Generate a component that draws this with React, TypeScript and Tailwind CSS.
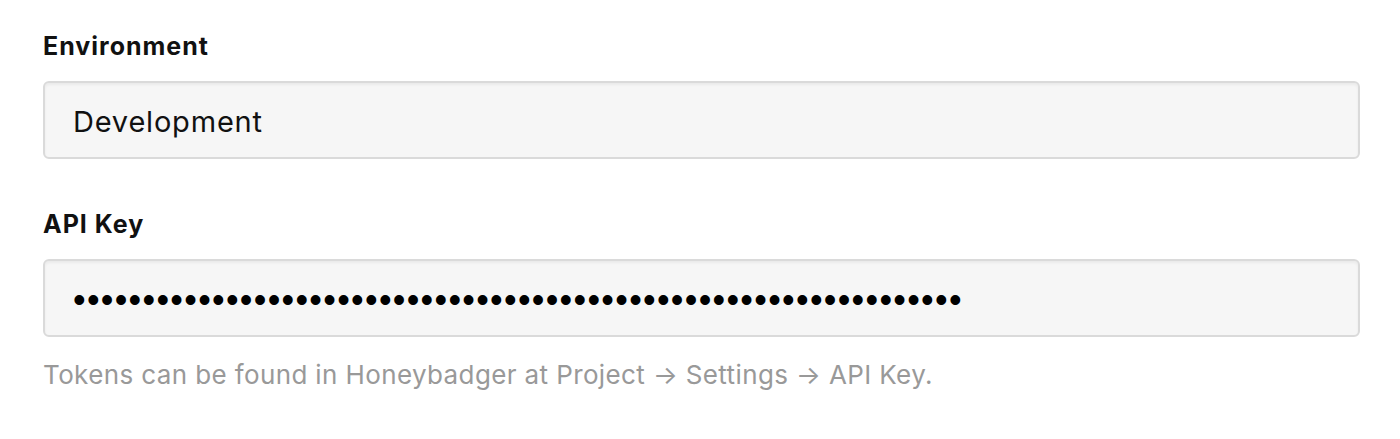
export default function App() {
  const dots = "•".repeat(64);
  return (
    <div className="w-[1400px] h-[439px] bg-white pl-[43px] pr-[40px] pt-[30px]" style={{ fontFamily: "Inter, 'Liberation Sans', sans-serif" }}>
      <div className="text-[25px] font-bold leading-[32px] tracking-[1px] text-[#111]">Environment</div>
      <div className="mt-[19px] h-[78px] rounded-[6px] border-2 border-[#dadada] bg-[#f6f6f6] shadow-[inset_0_2px_3px_rgba(0,0,0,0.05)] flex items-center px-[28px]">
        <span className="text-[29px] tracking-[0.8px] text-[#111] pt-[3px]">Development</span>
      </div>
      <div className="mt-[49px] text-[25px] font-bold leading-[32px] tracking-[1px] text-[#111]">API Key</div>
      <div className="mt-[19px] h-[78px] rounded-[6px] border-2 border-[#dadada] bg-[#f6f6f6] shadow-[inset_0_2px_3px_rgba(0,0,0,0.05)] flex items-center px-[28px]">
        <span className="text-[36px] leading-[40px] tracking-[1.3px] text-black pt-[3px]" style={{ fontFamily: "'Liberation Sans', sans-serif" }}>{dots}</span>
      </div>
      <div className="mt-[22px] text-[26px] leading-[32px] tracking-[0.38px] text-[#999]">Tokens can be found in Honeybadger at Project → Settings → API Key.</div>
    </div>
  );
}
